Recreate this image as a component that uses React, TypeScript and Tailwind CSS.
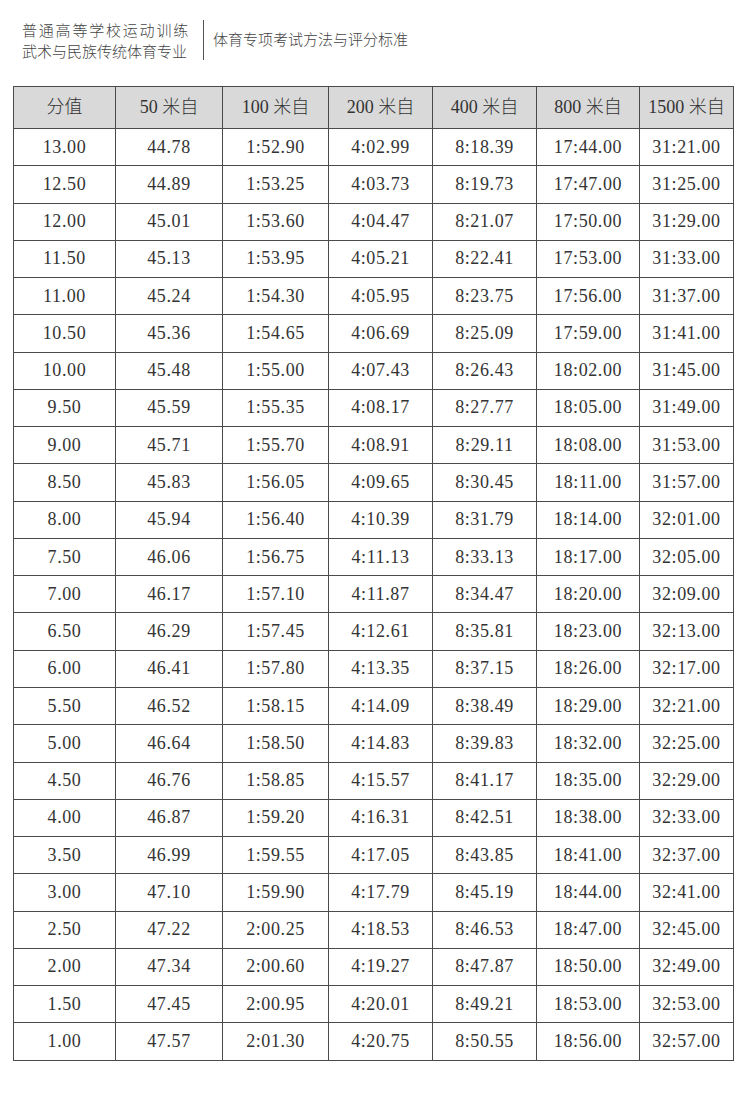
const rows: string[][] = [
  ['13.00', '44.78', '1:52.90', '4:02.99', '8:18.39', '17:44.00', '31:21.00'],
  ['12.50', '44.89', '1:53.25', '4:03.73', '8:19.73', '17:47.00', '31:25.00'],
  ['12.00', '45.01', '1:53.60', '4:04.47', '8:21.07', '17:50.00', '31:29.00'],
  ['11.50', '45.13', '1:53.95', '4:05.21', '8:22.41', '17:53.00', '31:33.00'],
  ['11.00', '45.24', '1:54.30', '4:05.95', '8:23.75', '17:56.00', '31:37.00'],
  ['10.50', '45.36', '1:54.65', '4:06.69', '8:25.09', '17:59.00', '31:41.00'],
  ['10.00', '45.48', '1:55.00', '4:07.43', '8:26.43', '18:02.00', '31:45.00'],
  ['9.50', '45.59', '1:55.35', '4:08.17', '8:27.77', '18:05.00', '31:49.00'],
  ['9.00', '45.71', '1:55.70', '4:08.91', '8:29.11', '18:08.00', '31:53.00'],
  ['8.50', '45.83', '1:56.05', '4:09.65', '8:30.45', '18:11.00', '31:57.00'],
  ['8.00', '45.94', '1:56.40', '4:10.39', '8:31.79', '18:14.00', '32:01.00'],
  ['7.50', '46.06', '1:56.75', '4:11.13', '8:33.13', '18:17.00', '32:05.00'],
  ['7.00', '46.17', '1:57.10', '4:11.87', '8:34.47', '18:20.00', '32:09.00'],
  ['6.50', '46.29', '1:57.45', '4:12.61', '8:35.81', '18:23.00', '32:13.00'],
  ['6.00', '46.41', '1:57.80', '4:13.35', '8:37.15', '18:26.00', '32:17.00'],
  ['5.50', '46.52', '1:58.15', '4:14.09', '8:38.49', '18:29.00', '32:21.00'],
  ['5.00', '46.64', '1:58.50', '4:14.83', '8:39.83', '18:32.00', '32:25.00'],
  ['4.50', '46.76', '1:58.85', '4:15.57', '8:41.17', '18:35.00', '32:29.00'],
  ['4.00', '46.87', '1:59.20', '4:16.31', '8:42.51', '18:38.00', '32:33.00'],
  ['3.50', '46.99', '1:59.55', '4:17.05', '8:43.85', '18:41.00', '32:37.00'],
  ['3.00', '47.10', '1:59.90', '4:17.79', '8:45.19', '18:44.00', '32:41.00'],
  ['2.50', '47.22', '2:00.25', '4:18.53', '8:46.53', '18:47.00', '32:45.00'],
  ['2.00', '47.34', '2:00.60', '4:19.27', '8:47.87', '18:50.00', '32:49.00'],
  ['1.50', '47.45', '2:00.95', '4:20.01', '8:49.21', '18:53.00', '32:53.00'],
  ['1.00', '47.57', '2:01.30', '4:20.75', '8:50.55', '18:56.00', '32:57.00'],
];

const headers = ['分值', '50 米自', '100 米自', '200 米自', '400 米自', '800 米自', '1500 米自'];
const widths = ['w-[102px]', 'w-[107px]', 'w-[106px]', 'w-[104px]', 'w-[104px]', 'w-[103px]', 'w-[94px]'];

export default function App() {
  return (
    <div className="w-[750px] h-[1095px] bg-white overflow-hidden text-[#333] [font-family:'Liberation_Serif','Noto_Sans_CJK_SC',serif]">
      {/* page header */}
      <div className="flex items-center pt-[19px] pl-[22px] h-[60px]">
        <div className="flex flex-col text-[15px] leading-[21px] text-[#444] [font-family:'Noto_Sans_CJK_SC',sans-serif] font-light">
          <span className="tracking-[1.8px]">普通高等学校运动训练</span>
          <span>武术与民族传统体育专业</span>
        </div>
        <div className="w-px h-[40px] bg-[#555] ml-[13px] mr-[9px]" />
        <span className="text-[15px] text-[#444] [font-family:'Noto_Sans_CJK_SC',sans-serif] font-light">体育专项考试方法与评分标准</span>
      </div>

      {/* score table */}
      <table className="ml-[13px] mt-[26px] border-collapse table-fixed w-[720px]">
        <thead>
          <tr className="h-[42px] bg-[#d9d9d9]">
            {headers.map((h, i) => (
              <th key={h} className={`${widths[i]} border-[1.5px] border-[#4a4a4a] text-[18px] font-light text-center`}>
                {h}
              </th>
            ))}
          </tr>
        </thead>
        <tbody>
          {rows.map((r) => (
            <tr key={r[0]} className="h-[37.28px]">
              {r.map((c, i) => (
                <td key={i} className="border-[1.5px] border-[#4a4a4a] text-center text-[18px] tracking-[0.6px] p-0">
                  {c}
                </td>
              ))}
            </tr>
          ))}
        </tbody>
      </table>
    </div>
  );
}
